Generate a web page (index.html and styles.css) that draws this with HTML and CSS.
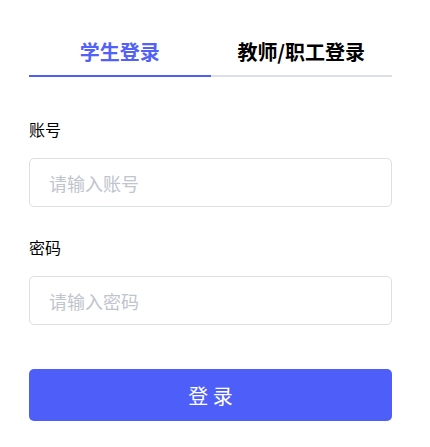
FILE: index.html
```html
<!DOCTYPE html>
<html lang="zh-CN">
<head>
<meta charset="utf-8">
<title>登录</title>
<link rel="stylesheet" href="styles.css">
</head>
<body>
<div class="login">
  <div class="tabs">
    <div class="tab active">学生登录</div>
    <div class="tab">教师/职工登录</div>
  </div>
  <form class="form">
    <div class="field">
      <label class="label">账号</label>
      <input class="input" type="text" placeholder="请输入账号">
    </div>
    <div class="field">
      <label class="label">密码</label>
      <input class="input" type="password" placeholder="请输入密码">
    </div>
    <button class="btn" type="button">登 录</button>
  </form>
</div>
</body>
</html>
```

FILE: styles.css
```css
html, body {
  margin: 0;
  padding: 0;
  background: #ffffff;
}
body {
  font-family: "Noto Sans CJK SC", "Noto Sans", sans-serif;
  color: #000000;
}
.login {
  width: 363px;
  margin-left: 29px;
  padding-top: 38px;
}
.tabs {
  display: flex;
  border-bottom: 2px solid #dcdfe6;
}
.tab {
  flex: 1;
  text-align: center;
  font-size: 20px;
  font-weight: 700;
  line-height: 28px;
  padding-bottom: 9px;
  margin-bottom: -2px;
  border-bottom: 2px solid transparent;
  color: #000000;
}
.tab.active {
  color: #5261f7;
  border-bottom-color: #4e5ef8;
}
.form {
  display: flex;
  flex-direction: column;
  padding-top: 41px;
}
.field {
  display: flex;
  flex-direction: column;
  gap: 18px;
  margin-bottom: 29px;
}
.label {
  font-size: 16px;
  line-height: 22px;
}
.input {
  box-sizing: border-box;
  height: 49px;
  width: 100%;
  border: 1px solid #dcdfe6;
  border-radius: 5px;
  padding: 0 19px;
  font-family: inherit;
  font-size: 18px;
  color: #333;
  outline: none;
}
.input::placeholder {
  color: #c0c4cc;
}
.btn {
  margin-top: 15px;
  height: 52px;
  width: 100%;
  border: none;
  border-radius: 5px;
  background: #4e5ef8;
  color: #ffffff;
  font-family: inherit;
  font-size: 20px;
  cursor: pointer;
}
```
